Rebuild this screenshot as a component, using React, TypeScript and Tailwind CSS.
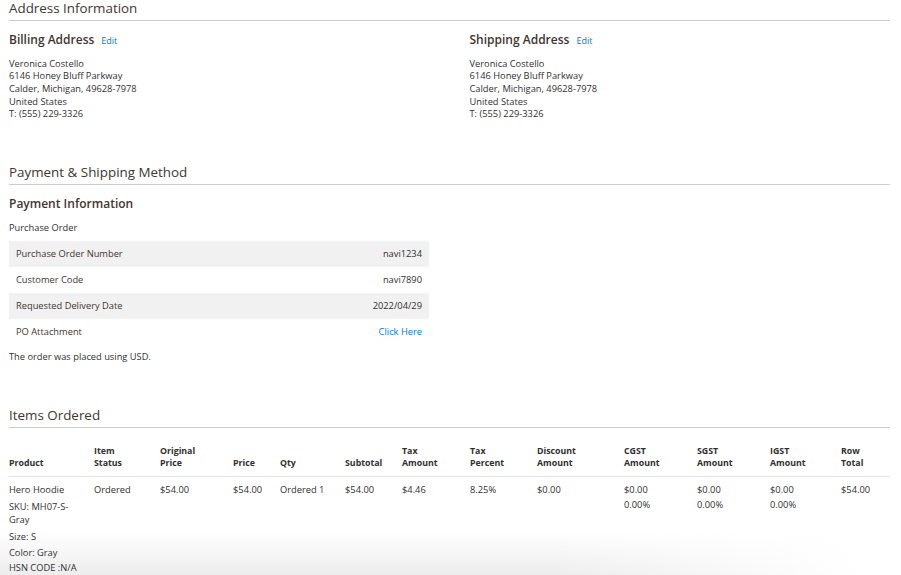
import React from 'react';

const address = [
  'Veronica Costello',
  '6146 Honey Bluff Parkway',
  'Calder, Michigan, 49628-7978',
  'United States',
  'T: (555) 229-3326',
];

const paymentRows = [
  { label: 'Purchase Order Number', value: 'navi1234' },
  { label: 'Customer Code', value: 'navi7890' },
  { label: 'Requested Delivery Date', value: '2022/04/29' },
  { label: 'PO Attachment', value: 'Click Here', link: true },
];

const columns = [
  { title: ['', 'Product'], w: 'w-[85px]' },
  { title: ['Item', 'Status'], w: 'w-[66px]' },
  { title: ['Original', 'Price'], w: 'w-[73px]' },
  { title: ['', 'Price'], w: 'w-[47px]' },
  { title: ['', 'Qty'], w: 'w-[65px]' },
  { title: ['', 'Subtotal'], w: 'w-[57px]' },
  { title: ['Tax', 'Amount'], w: 'w-[68px]' },
  { title: ['Tax', 'Percent'], w: 'w-[67px]' },
  { title: ['Discount', 'Amount'], w: 'w-[87px]' },
  { title: ['CGST', 'Amount'], w: 'w-[73px]' },
  { title: ['SGST', 'Amount'], w: 'w-[73px]' },
  { title: ['IGST', 'Amount'], w: 'w-[71px]' },
  { title: ['Row', 'Total'], w: 'w-[49px]' },
];

function SectionTitle({ children }: { children: React.ReactNode }) {
  return (
    <div className="text-[13.4px] leading-[16px] text-[#41362f] pb-[4px] border-b border-[#cccccc]">
      {children}
    </div>
  );
}

function AddressBlock({ title }: { title: string }) {
  return (
    <div>
      <div className="flex items-baseline gap-[7px] leading-[16px]">
        <span className="text-[12px] font-semibold text-[#41362f]">{title}</span>
        <span className="text-[9px] text-[#007bdb]">Edit</span>
      </div>
      <div className="mt-[8.6px]">
        {address.map((line) => (
          <div key={line}>{line}</div>
        ))}
      </div>
    </div>
  );
}

export default function App() {
  return (
    <div
      className="relative min-h-[575px] bg-white text-[9.3px] leading-[12.7px] text-[#303030] overflow-hidden"
      style={{ fontFamily: '"Open Sans", "Liberation Sans", sans-serif' }}
    >
      {/* soft shadow at the bottom edge of the capture */}
      <div className="pointer-events-none absolute left-0 bottom-0 w-[860px] h-[44px] bg-gradient-to-b from-transparent to-[#ededed] [mask-image:linear-gradient(to_right,black_65%,transparent)]" />

      <div className="relative w-[881px] ml-[9px]">
        <SectionTitle>Address Information</SectionTitle>
        <div className="grid grid-cols-2 gap-x-[40px] mt-[11px]">
          <AddressBlock title="Billing Address" />
          <AddressBlock title="Shipping Address" />
        </div>

        <div className="mt-[43px]">
          <SectionTitle>Payment &amp; Shipping Method</SectionTitle>
          <div className="w-[420px]">
            <div className="mt-[11px] text-[12px] leading-[16px] font-semibold text-[#41362f]">
              Payment Information
            </div>
            <div className="mt-[9.6px]">Purchase Order</div>
            <div className="mt-[6.6px]">
              {paymentRows.map((row, i) => (
                <div
                  key={row.label}
                  className={`flex justify-between items-center h-[26px] px-[7px] ${i % 2 === 0 ? 'bg-[#f1f1f1]' : ''}`}
                >
                  <span className="text-[#41362f]">{row.label}</span>
                  <span className={row.link ? 'text-[#007bdb]' : ''}>{row.value}</span>
                </div>
              ))}
            </div>
            <div className="mt-[5.6px]">The order was placed using USD.</div>
          </div>
        </div>

        <div className="mt-[43.6px]">
          <SectionTitle>Items Ordered</SectionTitle>
          <table className="table-fixed w-[881px] border-collapse">
            <thead>
              <tr className="border-b border-[#e3e3e3]">
                {columns.map((c, i) => (
                  <th
                    key={i}
                    className={`${c.w} text-left align-bottom font-bold text-[8.8px] leading-[12px] text-[#303030] pt-[17px] pb-[7px]`}
                  >
                    <div>{c.title[0] || '\u00a0'}</div>
                    <div>{c.title[1]}</div>
                  </th>
                ))}
              </tr>
            </thead>
            <tbody>
              <tr className="align-top">
                <td className="pt-[7px] pr-[10px]">
                  <div>Hero Hoodie</div>
                  <div className="mt-[4.3px]">SKU: MH07-S-Gray</div>
                  <div className="mt-[4.3px]">Size: S</div>
                  <div className="mt-[3.3px]">Color: Gray</div>
                  <div className="mt-[2.3px]">HSN CODE :N/A</div>
                </td>
                <td className="pt-[7px]">Ordered</td>
                <td className="pt-[7px]">$54.00</td>
                <td className="pt-[7px]">$54.00</td>
                <td className="pt-[7px]">Ordered 1</td>
                <td className="pt-[7px]">$54.00</td>
                <td className="pt-[7px]">$4.46</td>
                <td className="pt-[7px]">8.25%</td>
                <td className="pt-[7px]">$0.00</td>
                {['CGST', 'SGST', 'IGST'].map((k) => (
                  <td key={k} className="pt-[7px]">
                    <div>$0.00</div>
                    <div className="mt-[2.3px]">0.00%</div>
                  </td>
                ))}
                <td className="pt-[7px]">$54.00</td>
              </tr>
            </tbody>
          </table>
        </div>
      </div>
    </div>
  );
}
